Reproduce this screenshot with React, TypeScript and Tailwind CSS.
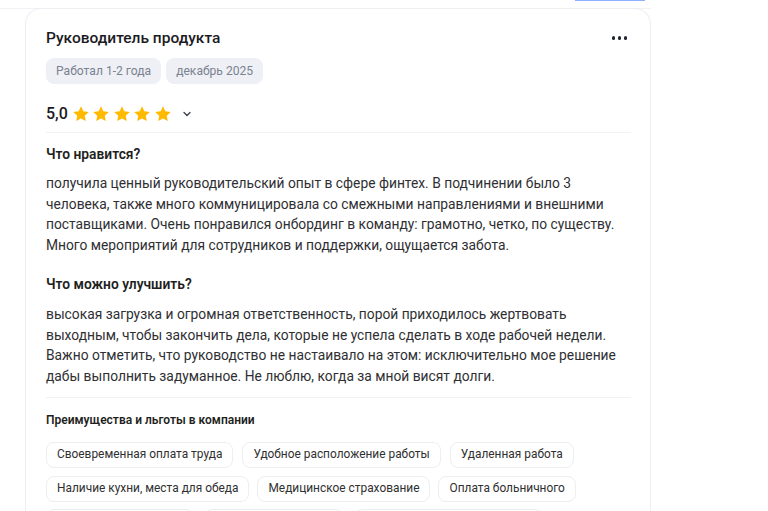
import React from "react";

const Star = () => (
  <svg width="18" height="18" viewBox="0 0 24 24" className="shrink-0">
    <path
      d="M12 1.8l3.1 6.6 7.2.9-5.3 5 1.4 7.1L12 17.9l-6.4 3.5 1.4-7.1-5.3-5 7.2-.9z"
      fill="#FFBA00"
    />
  </svg>
);

const benefits1 = ["Своевременная оплата труда", "Удобное расположение работы", "Удаленная работа"];
const benefits2 = ["Наличие кухни, места для обеда", "Медицинское страхование", "Оплата больничного"];
const benefits3 = ["Гибкий график работы", "Обучение и развитие", "Корпоративные мероприятия"];

const Chip = ({ text }: { text: string }) => (
  <div className="h-[26px] px-[10px] flex items-center rounded-[8px] border border-[#eceef2] text-[11.9px] text-[#303030] whitespace-nowrap">
    {text}
  </div>
);

export default function App() {
  return (
    <div
      className="w-[768px] h-[511px] overflow-hidden bg-white relative"
      style={{ fontFamily: "Roboto, 'Noto Sans', sans-serif" }}
    >
      <div className="absolute left-[575px] top-0 w-[70px] h-[1px] bg-[#8fb0ff]" />
      <div className="h-[9px] w-[651px] border-b border-[#f1f2f5]" />
      <div className="ml-[25px] w-[626px] rounded-t-[16px] border border-b-0 border-[#eceef2] pl-[20px] pr-[19px] pt-[17px] h-[600px] -mt-[1px]">
        <div className="flex items-center justify-between h-[24px]">
          <div className="text-[15.5px] font-medium text-[#1b1b1f] leading-[24px]">Руководитель продукта</div>
          <div className="flex gap-[2.5px] mr-[4px]">
            <div className="w-[3.5px] h-[3.5px] rounded-full bg-[#1f2430]" />
            <div className="w-[3.5px] h-[3.5px] rounded-full bg-[#1f2430]" />
            <div className="w-[3.5px] h-[3.5px] rounded-full bg-[#1f2430]" />
          </div>
        </div>
        <div className="flex gap-[5px] mt-[8px]">
          <div className="h-[26px] px-[10px] flex items-center rounded-[8px] bg-[#eef0f5] text-[12.1px] text-[#7b8290]">Работал 1-2 года</div>
          <div className="h-[26px] px-[10px] flex items-center rounded-[8px] bg-[#eef0f5] text-[12.1px] text-[#7b8290]">декабрь 2025</div>
        </div>
        <div className="flex items-center h-[24px] mt-[18px]">
          <span className="text-[16px] font-medium text-[#1b1b1f] mr-[4px]">5,0</span>
          <div className="flex gap-[2.5px]">
            <Star />
            <Star />
            <Star />
            <Star />
            <Star />
          </div>
          <svg width="12" height="12" viewBox="0 0 24 24" className="ml-[9px]" fill="none" stroke="#3a3f4a" strokeWidth="2.6" strokeLinecap="round" strokeLinejoin="round">
            <path d="M6 9l6 6 6-6" />
          </svg>
        </div>
        <div className="h-[1px] bg-[#f1f2f5] mt-[6px]" />
        <div className="text-[13.8px] font-semibold text-[#1f1f22] leading-[20px] mt-[11px]">Что нравится?</div>
        <p className="text-[13.8px] leading-[20.7px] text-[#2f2f33] mt-[9px]">
          получила ценный руководительский опыт в сфере финтех. В подчинении было 3 человека, также много коммуницировала со смежными направлениями и внешними поставщиками. Очень понравился онбординг в команду: грамотно, четко, по существу. Много мероприятий для сотрудников и поддержки, ощущается забота.
        </p>
        <div className="text-[13.8px] font-semibold text-[#1f1f22] leading-[20px] mt-[18px]">Что можно улучшить?</div>
        <p className="text-[13.8px] leading-[20.7px] text-[#2f2f33] mt-[10px]">
          высокая загрузка и огромная ответственность, порой приходилось жертвовать выходным, чтобы закончить дела, которые не успела сделать в ходе рабочей недели. Важно отметить, что руководство не настаивало на этом: исключительно мое решение дабы выполнить задуманное. Не люблю, когда за мной висят долги.
        </p>
        <div className="h-[1px] bg-[#f1f2f5] mt-[10px]" />
        <div className="text-[12px] font-semibold text-[#1f1f22] leading-[16px] mt-[14px]">Преимущества и льготы в компании</div>
        <div className="flex gap-[9px] mt-[14px]">
          {benefits1.map((b) => (
            <Chip key={b} text={b} />
          ))}
        </div>
        <div className="flex gap-[8px] mt-[8px]">
          {benefits2.map((b) => (
            <Chip key={b} text={b} />
          ))}
        </div>
        <div className="flex gap-[10px] mt-[7px]">
          {benefits3.map((b) => (
            <Chip key={b} text={b} />
          ))}
        </div>
      </div>
    </div>
  );
}
